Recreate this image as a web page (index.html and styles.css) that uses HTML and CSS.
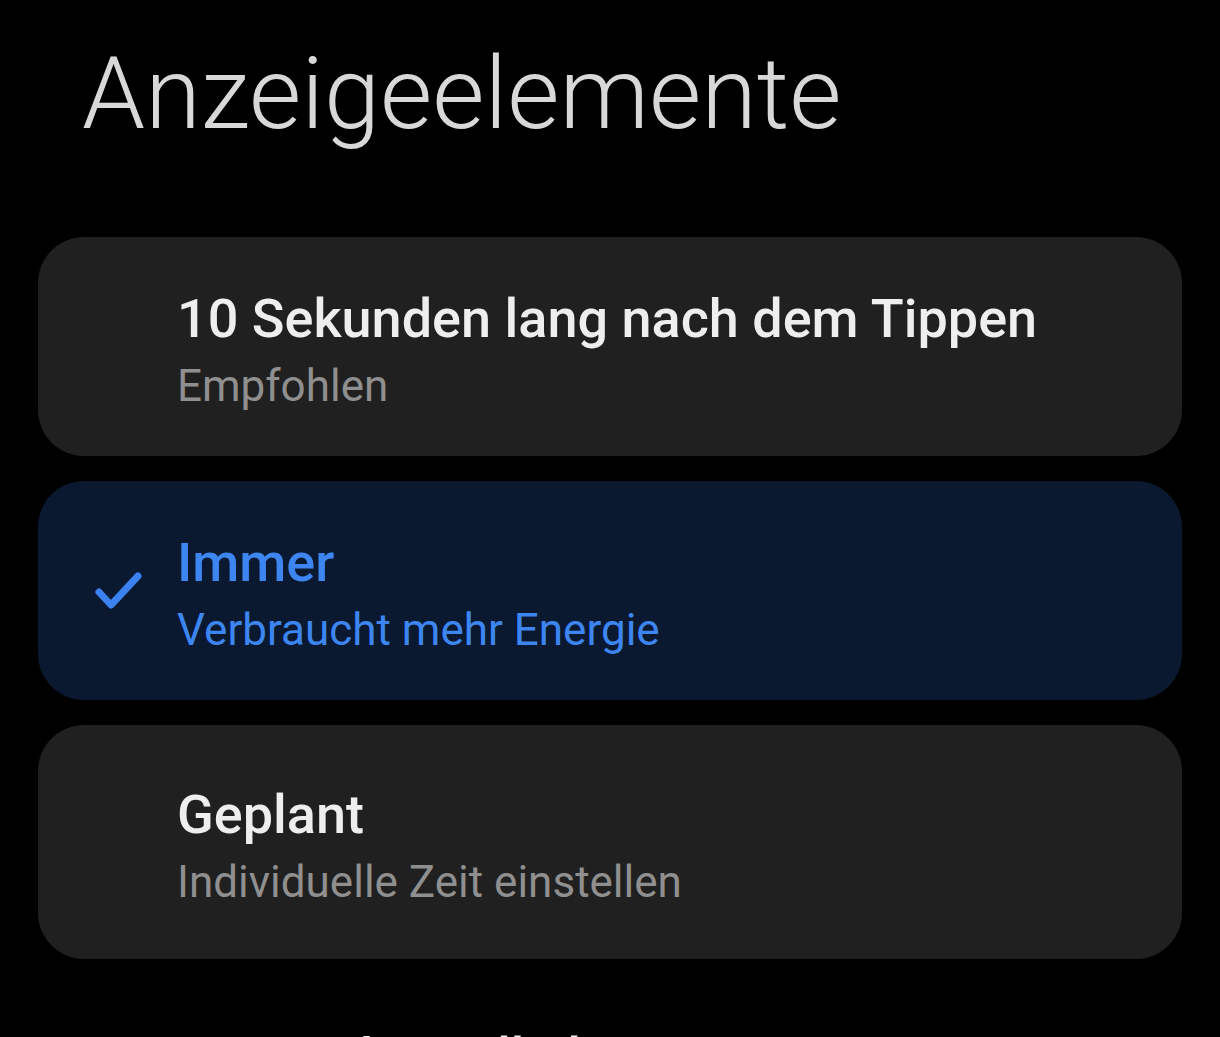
FILE: index.html
```html
<!DOCTYPE html>
<html lang="de">
<head>
<meta charset="utf-8">
<title>Anzeigeelemente</title>
<link rel="stylesheet" href="styles.css">
</head>
<body>
<main class="page">
  <h1 class="page-title">Anzeigeelemente</h1>
  <div class="options">
    <div class="option">
      <div class="option-icon"></div>
      <div class="option-text">
        <div class="option-title">10 Sekunden lang nach dem Tippen</div>
        <div class="option-sub">Empfohlen</div>
      </div>
    </div>
    <div class="option option-selected">
      <div class="option-icon">
        <svg class="check" viewBox="0 0 50 42" width="50" height="42" aria-hidden="true">
          <path d="M5 22 L17 35 L44 6" fill="none" stroke="currentColor" stroke-width="7" stroke-linecap="round" stroke-linejoin="round"/>
        </svg>
      </div>
      <div class="option-text">
        <div class="option-title">Immer</div>
        <div class="option-sub">Verbraucht mehr Energie</div>
      </div>
    </div>
    <div class="option option-tall">
      <div class="option-icon"></div>
      <div class="option-text">
        <div class="option-title">Geplant</div>
        <div class="option-sub">Individuelle Zeit einstellen</div>
      </div>
    </div>
  </div>
  <h2 class="section-title">Automatische Helligkeit</h2>
</main>
</body>
</html>
```

FILE: styles.css
```css
html, body {
  margin: 0;
  padding: 0;
  background: #000;
  height: 100%;
  overflow: hidden;
}

body {
  font-family: Roboto, "Noto Sans", "Liberation Sans", sans-serif;
  color: #eeeeee;
}

.page {
  padding: 0 38px;
}

.page-title {
  margin: 0;
  padding: 35px 0 0 44px;
  font-size: 101px;
  line-height: 117px;
  font-weight: 300;
  color: #d8d8d8;
}

.options {
  margin-top: 85px;
  display: flex;
  flex-direction: column;
  gap: 25px;
}

.option {
  display: grid;
  grid-template-columns: 139px 1fr;
  align-items: center;
  background: #202020;
  border-radius: 46px;
}

.option-text {
  padding: 51px 0 39px;
}

.option-tall .option-text {
  padding: 59px 0 46px;
}

.option-selected {
  background: #0a1930;
}

.option-icon {
  padding-left: 56px;
  display: flex;
  align-items: center;
}

.check {
  display: block;
  color: #3b82f0;
}

.option-title {
  font-size: 54px;
  line-height: 62px;
  font-weight: 500;
  color: #eeeeee;
}

.option-sub {
  margin-top: 5px;
  font-size: 44px;
  line-height: 62px;
  font-weight: 400;
  color: #8f8f8f;
}

.option-selected .option-title,
.option-selected .option-sub {
  color: #3d86f2;
}

.section-title {
  margin: 68px 0 0 50px;
  font-size: 53px;
  line-height: 62px;
  font-weight: 500;
  color: #eeeeee;
  white-space: nowrap;
}
```
